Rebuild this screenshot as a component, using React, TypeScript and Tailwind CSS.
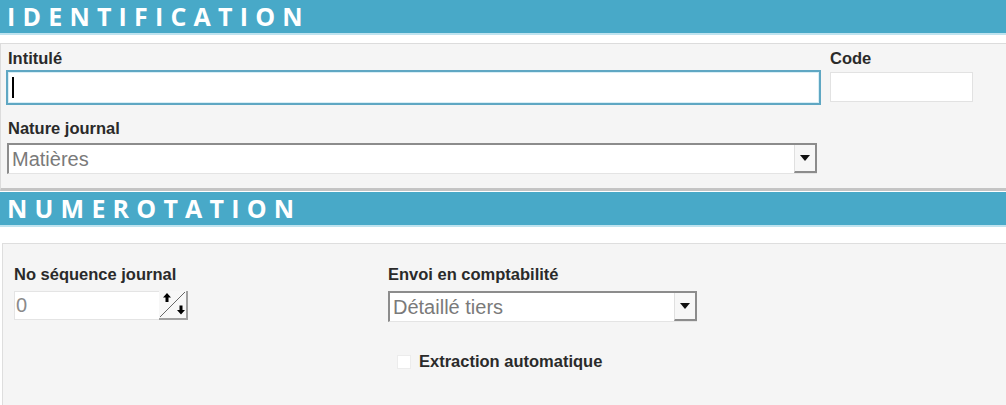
import React from "react";

function SectionHeader({ title }: { title: string }) {
  return (
    <div className="h-[35px] bg-[#48a9c8] border-b-2 border-[#bfe3ef] flex items-center pl-[7px]">
      <span className="text-white font-bold text-[25px] tracking-[7.2px] leading-none [font-family:'Open_Sans',sans-serif]">
        {title}
      </span>
    </div>
  );
}

function SelectBox({ value, className }: { value: string; className: string }) {
  return (
    <div
      className={
        "flex h-[31px] bg-white border-t-2 border-l-2 border-[#8c8c8c] border-b border-b-[#e4e4e4] " +
        className
      }
    >
      <span className="flex-1 pl-[3px] text-[20px] leading-[28px] text-[#7a7a7a] truncate">{value}</span>
      <div className="w-[23px] h-[28px] bg-[#f7f7f7] border-l border-l-[#e0e0e0] border-r-2 border-b-2 border-[#8c8c8c] flex items-center justify-center">
        <svg width="10" height="6" viewBox="0 0 10 6">
          <path d="M0 0h10L5 6z" fill="#111" />
        </svg>
      </div>
    </div>
  );
}

export default function App() {
  return (
    <div className="w-[1006px] h-[405px] overflow-hidden bg-white [font-family:'Liberation_Sans',Arial,sans-serif] text-[#2a2a2a]">
      <SectionHeader title="IDENTIFICATION" />
      <div className="mt-[8px] h-[148px] bg-[#f5f5f5] border-t border-l border-[#dcdcdc] border-b-[3px] border-b-[#c4c4c4]">
        <div className="flex">
          <div className="pl-[5px]">
            <div className="font-bold text-[16.5px] leading-[19px] pt-[5px] pl-[2px]">Intitulé</div>
            <div className="mt-[2px] w-[815px] h-[35px] bg-white border-2 border-[#5fa7c3] shadow-[inset_0_0_0_1px_#d8eef6] flex items-center pl-[4px]">
              <div className="w-[2px] h-[21px] bg-black" />
            </div>
          </div>
          <div className="pl-[9px]">
            <div className="font-bold text-[16.5px] leading-[19px] pt-[5px]">Code</div>
            <div className="mt-[4px] w-[143px] h-[30px] bg-white border border-[#e2e2e2]" />
          </div>
        </div>
        <div className="pl-[7px] pt-[14px] font-bold text-[16.5px] leading-[19px]">Nature journal</div>
        <div className="pl-[6px] pt-[5px]">
          <SelectBox value="Matières" className="w-[810px]" />
        </div>
      </div>
      <div className="mt-[1px]">
        <SectionHeader title="NUMEROTATION" />
      </div>
      <div className="mt-[16px] ml-[2px] h-[200px] bg-[#f5f5f5] border-t border-l border-[#dedede]">
        <div className="flex pt-[21px]">
          <div className="pl-[11px] w-[385px]">
            <div className="font-bold text-[16.5px] leading-[19px]">No séquence journal</div>
            <div className="mt-[7px] flex">
              <div className="w-[145px] h-[29px] bg-white border border-[#e4e4e4] border-r-0 pl-[1px] text-[20px] leading-[27px] text-[#8a8a8a]">
                0
              </div>
              <div className="w-[29px] h-[29px] bg-[#f7f7f7] border-r-2 border-b-2 border-[#a0a0a0]">
                <svg width="27" height="27" viewBox="0 0 27 27">
                  <line x1="1" y1="26" x2="26" y2="1" stroke="#666" strokeWidth="1" />
                  <path d="M8 2l4 4.5H9.5V11h-3V6.5H4z" fill="#000" />
                  <path d="M20.5 14.5V19H18l4 4.5 4-4.5h-2.5v-4.5z" fill="#000" />
                </svg>
              </div>
            </div>
          </div>
          <div>
            <div className="font-bold text-[16.5px] leading-[19px]">Envoi en comptabilité</div>
            <div className="mt-[7px]">
              <SelectBox value="Détaillé tiers" className="w-[309px]" />
            </div>
            <div className="flex items-center mt-[30px] pl-[9px]">
              <div className="w-[14px] h-[14px] bg-white border border-[#ececec]" />
              <span className="ml-[8px] font-bold text-[16.5px] leading-[19px]">Extraction automatique</span>
            </div>
          </div>
        </div>
      </div>
    </div>
  );
}
